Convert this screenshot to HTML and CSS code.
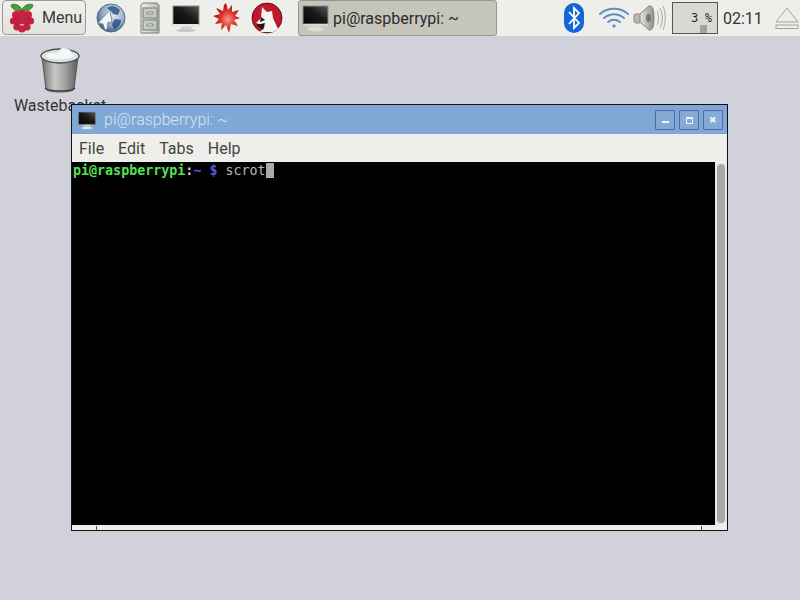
FILE: index.html
```html
<!DOCTYPE html>
<html lang="en">
<head>
<meta charset="utf-8">
<title>Raspberry Pi desktop</title>
<link rel="stylesheet" href="styles.css">
</head>
<body>
<div class="panel">
  <div class="menu-btn">
    <svg class="rasp" viewBox="0 0 26 30" width="26" height="30">
      <path d="M12 8C8 8 3 7 2 2c4-2 9 0 11 5 2-5 7-7 11-5-1 5-6 6-10 6z" fill="#4d9a3a" stroke="#2c6a22" stroke-width=".8"/>
      <g fill="#c8203f">
        <circle cx="13" cy="11" r="4"/><circle cx="7" cy="12" r="4"/><circle cx="19" cy="12" r="4"/>
        <circle cx="4.5" cy="18" r="3.6"/><circle cx="21.5" cy="18" r="3.6"/><circle cx="10" cy="18" r="3.8"/><circle cx="16" cy="18" r="3.8"/>
        <circle cx="8" cy="24" r="3.6"/><circle cx="18" cy="24" r="3.6"/><circle cx="13" cy="26" r="3.6"/>
      </g>
      <g fill="#8c1730" opacity=".55">
        <path d="M10 14.5h6v1h-6zM5 15h3v1H5zM18 15h3v1h-3zM7 20.5h3v1H7zM16 20.5h3v1h-3zM12 22h2v1h-2z"/>
      </g>
    </svg>
    <span>Menu</span>
  </div>
  <div class="launchers">
    <svg width="32" height="32" viewBox="0 0 32 32">
      <defs><radialGradient id="gl" cx=".6" cy=".35" r=".7"><stop offset="0" stop-color="#e4edf4"/><stop offset=".6" stop-color="#8ea9c6"/><stop offset="1" stop-color="#33547f"/></radialGradient></defs>
      <circle cx="16" cy="16" r="14" fill="url(#gl)" stroke="#5d6c80"/>
      <path d="M12 6c5-3 9-2 13 2l-2 5-5-1-2-3zM20 17l6 1c0 4-3 8-7 9l-2-5z" fill="#1e4474" opacity=".75"/>
      <path d="M15 8 3 21l5 1 2 6 2-1 1-7 4 1z" fill="#f2f4f6" stroke="#6f7d8c" stroke-width=".8"/>
    </svg>
    <svg width="24" height="32" viewBox="0 0 24 32">
      <defs><linearGradient id="cab" x2="1"><stop offset="0" stop-color="#eef0ea"/><stop offset="1" stop-color="#b4b8ae"/></linearGradient></defs>
      <path d="M3 3l2-2h14l2 2v28H3z" fill="url(#cab)" stroke="#777c74"/>
      <rect x="5" y="6" width="14" height="10" fill="#c6cbc0" stroke="#777c74"/>
      <rect x="5" y="18" width="14" height="10" fill="#c6cbc0" stroke="#777c74"/>
      <path d="M9 10h6v2H9zM9 22h6v2H9z" fill="#eef0ea" stroke="#555" stroke-width=".6"/>
    </svg>
    <svg class="mon" width="30" height="30" viewBox="0 0 30 30">
      <defs><linearGradient id="scr" x1="0" y1="1" x2="1" y2="0"><stop offset="0" stop-color="#050505"/><stop offset=".55" stop-color="#1a1a1a"/><stop offset="1" stop-color="#5a5a5a"/></linearGradient></defs>
      <rect x="2" y="3" width="26" height="19" fill="url(#scr)" stroke="#8f8f8f"/>
      <rect x="2" y="21" width="26" height="2.5" fill="#e6e6e6"/>
      <path d="M10 23.5h10l1 3H9z" fill="#d0d0d0"/>
      <ellipse cx="15" cy="27.5" rx="10" ry="1.5" fill="#c4c4c4"/>
    </svg>
    <svg width="28" height="32" viewBox="0 0 28 32">
      <defs><radialGradient id="st" cx=".55" cy=".55" r=".5"><stop offset="0" stop-color="#f09a85"/><stop offset=".6" stop-color="#dd2a26"/><stop offset="1" stop-color="#b01214"/></radialGradient></defs>
      <path d="M14 1l2 7 4-5 0 7 7-2-4 6 5 2-6 2 4 6-7-2-2 9-3-8-5 5 1-7-7 1 4-5-6-3 7-2-4-6 7 3 1-6z" fill="url(#st)"/>
    </svg>
    <svg width="32" height="32" viewBox="0 0 32 32">
      <circle cx="16" cy="16" r="15" fill="#c0182c" stroke="#3a0a10" stroke-width=".8"/>
      <path d="M11 5l5 5 5-1 1 7 5 11-5 3H9l5-6-9-3 5-5z" fill="#f6f4f2"/>
      <path d="M5 23l9-2-2 7zM10 15l4 3-5 2z" fill="#1c1414"/>
    </svg>
  </div>
  <div class="task">
    <svg width="30" height="30" viewBox="0 0 30 30">
      <rect x="2" y="3" width="25" height="18" fill="url(#scr)" stroke="#8f8f8f"/>
      <rect x="2" y="21" width="25" height="2" fill="#d8d8d4"/>
      <ellipse cx="14.500" cy="26" rx="8" ry="2.500" fill="#dcdcd8"/>
    </svg>
    <span>pi@raspberrypi: ~</span>
  </div>
  <div class="tray">
    <svg class="bt" width="22" height="32" viewBox="0 0 22 32">
      <rect x="1" y="1" width="20" height="30" rx="10" fill="#1565d8"/>
      <path d="M6 10l10 11-5 5V6l5 5L6 22" fill="none" stroke="#fff" stroke-width="1.800"/>
    </svg>
    <svg class="wifi" width="32" height="26" viewBox="0 0 32 26">
      <g fill="none" stroke="#5f8fc0" stroke-linecap="round">
        <path d="M2 9c8-7 20-7 28 0" stroke-width="2"/>
        <path d="M6 13c6-5 14-5 20 0" stroke-width="2"/>
        <path d="M10 17c4-3 8-3 12 0" stroke-width="2"/>
      </g>
      <path d="M14 21l2-2 2 2-2 2z" fill="#5f8fc0"/>
    </svg>
    <svg class="vol" width="34" height="30" viewBox="0 0 34 30">
      <defs><linearGradient id="sp" x2="1"><stop offset="0" stop-color="#e8e8e4"/><stop offset="1" stop-color="#8e8e88"/></linearGradient></defs>
      <rect x="1" y="11" width="7" height="9" rx="2" fill="#b8b8b2" stroke="#8a8a84"/>
      <path d="M7 11l9-8c4-1 5 5 5 12s-1 13-5 12l-9-8z" fill="url(#sp)" stroke="#84847e"/>
      <ellipse cx="15.500" cy="15" rx="2.500" ry="4" fill="#77776f"/>
      <path d="M24 8c2 4 2 10 0 14M27 5c3 6 3 15 0 20M30 3c3 7 3 17 0 24" fill="none" stroke="#a8a8a4" stroke-width="1"/>
    </svg>
    <div class="cpu">
      <span>3 %</span>
      <i class="cpu-bar"></i>
    </div>
    <span class="clock">02:11</span>
    <svg class="eject" width="26" height="26" viewBox="0 0 26 26">
      <path d="M13 3 24 17H2z" fill="#eeeeea" stroke="#a3a39d"/>
      <rect x="2" y="20" width="22" height="3.500" fill="#eeeeea" stroke="#a3a39d"/>
    </svg>
  </div>
</div>

<div class="desk-icon">
  <svg width="44" height="50" viewBox="0 0 44 50">
    <defs>
      <linearGradient id="bin" x2="1"><stop offset="0" stop-color="#6e6e6e"/><stop offset=".35" stop-color="#c8c8c8"/><stop offset=".6" stop-color="#a8a8a8"/><stop offset="1" stop-color="#5c5c5c"/></linearGradient>
    </defs>
    <path d="M4 13l4 32c1 4 27 4 28 0l4-32z" fill="url(#bin)" stroke="#555"/>
    <ellipse cx="22" cy="12" rx="19" ry="7" fill="#dfe4e6" stroke="#4d4d4d" stroke-width="1.400"/>
    <path d="M6 12l6-4 6 1 7-6 7 3 2 3 4 3c-6 5-26 6-32 0z" fill="#f4f7f8" stroke="#c4cbce" stroke-width=".6"/>
    <path d="M7 44c4 4 26 4 30 0" fill="none" stroke="#444" stroke-width="1.600"/>
  </svg>
  <span class="desk-label">Wastebasket</span>
</div>

<div class="window">
  <div class="titlebar">
    <svg width="20" height="22" viewBox="0 0 30 30">
      <rect x="2" y="3" width="26" height="19" fill="url(#scr)" stroke="#8f8f8f"/>
      <path d="M10 22h10l1 4H9z" fill="#c4c8cc"/>
      <ellipse cx="15" cy="27" rx="9" ry="1.800" fill="#dfe3e6"/>
    </svg>
    <span class="title">pi@raspberrypi: ~</span>
    <div class="win-btns">
      <div class="win-btn"><i class="g-min"></i></div>
      <div class="win-btn"><i class="g-max"></i></div>
      <div class="win-btn"><span class="g-close">✖</span></div>
    </div>
  </div>
  <div class="menubar">
    <span>File</span><span>Edit</span><span>Tabs</span><span>Help</span>
  </div>
  <div class="term-wrap">
    <div class="term"><b class="green">pi@raspberrypi</b><b class="white">:</b><b class="blue">~</b> <b class="blue">$</b> scrot<i class="cursor"></i></div>
    <div class="scrollbar"><i class="thumb"></i></div>
  </div>
  <div class="statusbar"><i class="seg-a"></i><i class="seg-b"></i><i class="seg-c"></i></div>
</div>
</body>
</html>
```
FILE: styles.css
```css
* { box-sizing: border-box; }
html, body { margin: 0; height: 100%; }
body {
  width: 800px;
  height: 600px;
  overflow: hidden;
  position: relative;
  background: #d1d1db;
  font-family: Roboto, "Liberation Sans", sans-serif;
  font-weight: 300;
  color: #2e2e2e;
}
.panel {
  height: 36px;
  background: #eeeeeb;
  display: flex;
  align-items: center;
  padding-left: 2px;
}
.menu-btn {
  width: 84px;
  height: 35px;
  margin-top: -1px;
  display: flex;
  align-items: center;
  gap: 7px;
  padding-left: 6px;
  border: 1px solid #9c9c96;
  border-radius: 4px;
  background: linear-gradient(#efefec, #e2e2de);
  font-size: 16px;
  font-weight: 400;
  color: #3a3a3a;
}
.launchers {
  display: flex;
  align-items: center;
  margin-left: 9px;
  gap: 11px;
  width: 197px;
  flex: none;
}
.launchers .mon { margin-left: -2px; }
.task {
  width: 199px;
  height: 36px;
  margin-left: 6px;
  display: flex;
  align-items: center;
  gap: 2px;
  padding: 0 0 0 2px;
  background: #c6c5bc;
  border: 1px solid #96968e;
  border-radius: 3px;
  font-size: 16px;
  font-weight: 400;
  color: #2b2b2b;
}
.tray {
  display: flex;
  align-items: center;
  margin-left: 66px;
}
.wifi { margin-left: 13px; }
.vol { margin-left: 3px; }
.cpu {
  width: 46px;
  height: 32px;
  margin-left: 5px;
  position: relative;
  background: #d8d8d4;
  border: 1px solid #55554f;
  display: flex;
  align-items: center;
  justify-content: flex-end;
  padding-right: 5px;
  font-family: "DejaVu Sans Mono", monospace;
  font-size: 11.500px;
  font-weight: 400;
  white-space: pre;
  color: #222;
}
.cpu-bar {
  position: absolute;
  left: 27px;
  bottom: 0;
  width: 7px;
  height: 8px;
  background: #a2a29c;
}
.clock {
  margin-left: 5px;
  font-size: 16px;
  font-weight: 400;
  color: #333;
}
.eject { margin-left: 11px; }
.desk-icon {
  position: absolute;
  left: 0;
  top: 44px;
  width: 120px;
  display: flex;
  flex-direction: column;
  align-items: center;
}
.desk-label {
  margin-top: 2px;
  font-size: 16px;
  font-weight: 400;
  color: #333;
}
.window {
  position: absolute;
  left: 71px;
  top: 104px;
  width: 657px;
  height: 427px;
  border: 1px solid #111;
  display: flex;
  flex-direction: column;
  background: #eeeeea;
}
.titlebar {
  height: 29px;
  flex: none;
  background: #7fa8d6;
  display: flex;
  align-items: center;
  padding: 0 5px;
  color: #d8e4f0;
}
.title {
  margin-left: 7px;
  font-size: 16px;
  flex: 1;
}
.win-btns { display: flex; gap: 4px; margin-right: -1px; margin-top: 1px; }
.win-btn {
  width: 20px;
  height: 20px;
  background: #86aad8;
  border: 1px solid #4a6f9d;
  border-radius: 1px;
  display: flex;
  align-items: center;
  justify-content: center;
}
.g-min { width: 7px; height: 2px; margin-top: 3px; background: #f2f5f8; }
.g-max { width: 7px; height: 7px; border: 2px solid #f2f5f8; border-top-width: 2px; border-bottom-width: 1px; border-left-width: 1px; border-right-width: 1px; }
.g-close { font-size: 9px; line-height: 1; color: #f2f5f8; font-family: "DejaVu Sans", sans-serif; }
.menubar {
  height: 28px;
  flex: none;
  background: #eeeeea;
  display: flex;
  align-items: center;
  gap: 14px;
  padding-left: 7px;
  font-size: 16px;
  font-weight: 400;
  color: #444;
}
.term-wrap {
  flex: 1;
  display: flex;
  min-height: 0;
}
.term {
  flex: 1;
  background: #000;
  padding: 1px 0 0 1px;
  font-family: "DejaVu Sans Mono", monospace;
  font-size: 13.330px;
  line-height: 16px;
  font-weight: 400;
  color: #b8b8b8;
  white-space: pre;
}
.term b { font-weight: 700; }
.green { color: #55e055; }
.white { color: #d0d0d0; }
.blue { color: #5858e0; }
.cursor {
  display: inline-block;
  width: 8px;
  height: 15px;
  vertical-align: -3px;
  background: #aaa;
}
.scrollbar {
  width: 12px;
  flex: none;
  background: #e9e9e5;
  padding: 2px 2px 2px 2px;
}
.thumb {
  display: block;
  width: 8px;
  height: 100%;
  border-radius: 4px;
  background: #a8a8a6;
}
.statusbar {
  height: 5px;
  flex: none;
  display: flex;
  background: #eeeeea;
  border-top: 1px solid #eeeeea;
}
.seg-a { width: 25px; border-right: 1px solid #555; }
.seg-b { flex: 1; border-right: 1px solid #555; }
.seg-c { width: 25px; }
```
